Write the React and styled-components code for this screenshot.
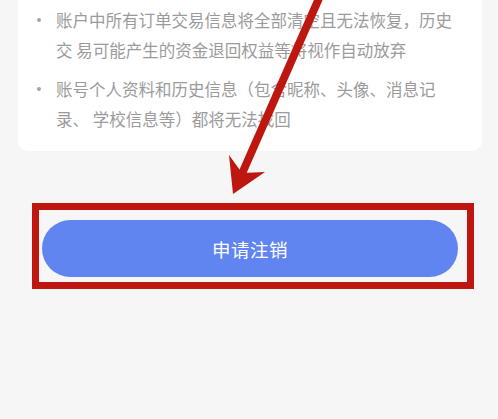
import styled, { createGlobalStyle } from "styled-components";

const GlobalStyle = createGlobalStyle`
  html, body {
    margin: 0;
    padding: 0;
    background: #f6f6f6;
    font-family: "Noto Sans CJK SC", "Noto Sans", sans-serif;
  }
`;

const Page = styled.div`
  position: relative;
  width: 498px;
  height: 419px;
  overflow: hidden;
  background: #f6f6f6;
`;

const Card = styled.div`
  margin: 0 16px 0 18px;
  padding: 5px 20px 17px 18px;
  background: #ffffff;
  border-radius: 0 0 10px 10px;
`;

const List = styled.ul`
  list-style: none;
  margin: 0;
  padding: 0;
  display: flex;
  flex-direction: column;
  gap: 9px;
`;

const Item = styled.li`
  display: flex;
  align-items: flex-start;
  font-size: 16.5px;
  line-height: 30px;
  color: #9b9b9b;
`;

const Dot = styled.span`
  flex: none;
  width: 4px;
  height: 4px;
  margin: 13px 15px 0 1px;
  border-radius: 50%;
  background: #a5a5a5;
`;

const Frame = styled.div`
  margin: 52px 24px 0 32px;
  padding: 10px 9px 5px 3px;
  border: 7px solid #bd1710;
`;

const Button = styled.button`
  display: block;
  width: 100%;
  height: 57px;
  border: none;
  border-radius: 29px;
  background: #6085f0;
  color: #ffffff;
  font-family: inherit;
  font-size: 18.5px;
  letter-spacing: 0.5px;
`;

const Arrow = styled.svg`
  position: absolute;
  left: 0;
  top: 0;
  pointer-events: none;
`;

const items = [
  "账户中所有订单交易信息将全部清空且无法恢复，历史交 易可能产生的资金退回权益等将视作自动放弃",
  "账号个人资料和历史信息（包含昵称、头像、消息记录、 学校信息等）都将无法找回",
];

export default function App() {
  return (
    <Page>
      <GlobalStyle />
      <Card>
        <List>
          {items.map((t) => (
            <Item key={t}>
              <Dot />
              <span>{t}</span>
            </Item>
          ))}
        </List>
      </Card>
      <Frame>
        <Button>申请注销</Button>
      </Frame>
      <Arrow width="498" height="220" viewBox="0 0 498 220">
        <line x1="320" y1="-4" x2="241" y2="176" stroke="#bd1710" strokeWidth="8" />
        <polygon points="229,155 242,173 265,172 233,194" fill="#bd1710" />
      </Arrow>
    </Page>
  );
}
